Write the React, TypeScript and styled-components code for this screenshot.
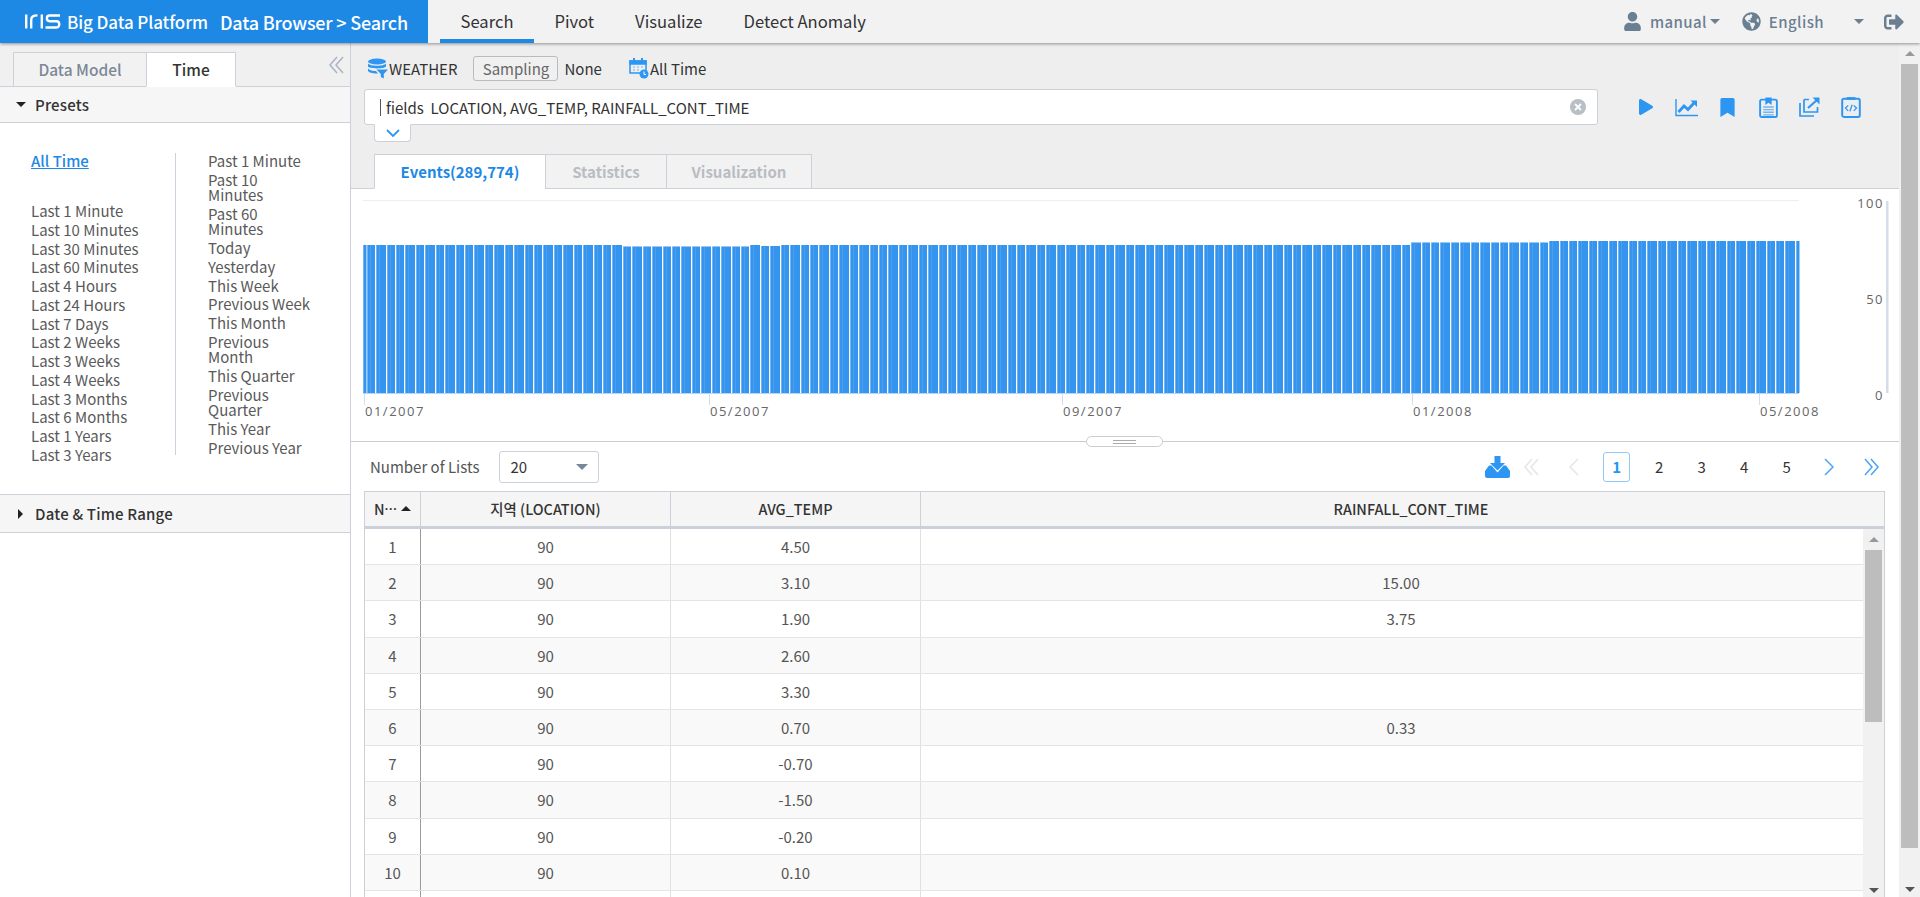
import React from 'react'
import styled, { createGlobalStyle } from 'styled-components'
import { FaUser, FaGlobeAmericas, FaSignOutAlt, FaBookmark, FaPlay } from 'react-icons/fa'

const GlobalStyle = createGlobalStyle`
  html, body {
    margin: 0;
    height: 100%;
    overflow: hidden;
    background: #fff;
  }
  body, button {
    font-family: 'Noto Sans CJK KR', 'Noto Sans', sans-serif;
    font-size: 15px;
    color: #333;
  }
  * {
    box-sizing: border-box;
  }
`

const Page = styled.div`
  display: flex;
  flex-direction: column;
  width: 1920px;
  height: 897px;
  overflow: hidden;
`

/* top bar */
const TopBar = styled.header`
  position: relative;
  z-index: 2;
  display: flex;
  flex: none;
  height: 43px;
  background: #f2f2f2;
  box-shadow: 0 1px 3px rgba(0, 0, 0, 0.4);
`

const Brand = styled.div`
  display: flex;
  align-items: center;
  width: 428px;
  padding-left: 25px;
  background: #1e88e5;
  color: #fff;
`

const BrandName = styled.span`
  margin-left: 6px;
  font-size: 17px;
  font-weight: 500;
  letter-spacing: -0.1px;
`

const BrandPage = styled.span`
  margin-left: 12px;
  font-size: 18px;
  font-weight: 500;
  letter-spacing: -0.2px;
`

const Nav = styled.nav`
  display: flex;
  margin-left: 12px;
`

const NavItem = styled.a<{ $active?: boolean }>`
  display: flex;
  align-items: center;
  height: 43px;
  padding: 3px 20.5px 0;
  border-bottom: 4px solid ${p => (p.$active ? '#1e88e5' : 'transparent')};
  font-size: 16.6px;
  color: #333;
`

const UserMenu = styled.div`
  display: flex;
  align-items: center;
  margin-left: auto;
  padding-right: 16px;
  color: #6b7f92;
  font-weight: 500;
  font-size: 15px;
`

const MenuText = styled.span<{ $gap: number }>`
  margin-left: 8px;
  margin-right: ${p => p.$gap}px;
  letter-spacing: 0.4px;
`

const Caret = styled.i<{ $dir?: 'down' | 'right' | 'up'; $size?: number; $color?: string }>`
  display: inline-block;
  flex: none;
  width: 0;
  height: 0;
  border-style: solid;
  border-color: transparent;
  ${p => {
    const s = p.$size ?? 5
    const c = p.$color ?? 'currentColor'
    if (p.$dir === 'right') return `border-width: ${s}px 0 ${s}px ${s}px; border-left-color: ${c};`
    if (p.$dir === 'up') return `border-width: 0 ${s}px ${s}px; border-bottom-color: ${c};`
    return `border-width: ${s}px ${s}px 0; border-top-color: ${c};`
  }}
`

const CaretSlot = styled.span<{ $gap: number }>`
  display: flex;
  margin-right: ${p => p.$gap}px;
`

/* body */
const Body = styled.div`
  display: flex;
  flex: 1;
  min-height: 0;
`

const Sidebar = styled.aside`
  flex: none;
  width: 351px;
  border-right: 1px solid #ccd1d9;
  background: #fff;
`

const SideTabs = styled.div`
  position: relative;
  display: flex;
  align-items: flex-end;
  height: 44px;
  padding-left: 13px;
  border-bottom: 1px solid #ccd1d9;
  background: #f0f0f0;
`

const SideTab = styled.div<{ $active?: boolean }>`
  display: flex;
  align-items: center;
  justify-content: center;
  width: ${p => (p.$active ? 90 : 134)}px;
  height: 35px;
  padding-bottom: 2px;
  margin-bottom: -1px;
  border: 1px solid #ccd1d9;
  border-bottom-color: ${p => (p.$active ? '#fff' : '#ccd1d9')};
  margin-left: ${p => (p.$active ? -1 : 0)}px;
  background: ${p => (p.$active ? '#fff' : '#f2f2f2')};
  color: ${p => (p.$active ? '#333' : '#7b8896')};
  font-size: 15.5px;
  font-weight: 500;
`

const CollapseIcon = styled.span`
  position: absolute;
  top: 13px;
  right: 6px;
  display: flex;
  color: #a9b4c2;
`

const SectionHead = styled.div<{ $top?: boolean }>`
  display: flex;
  align-items: center;
  height: ${p => (p.$top ? 36 : 39)}px;
  padding-left: ${p => (p.$top ? 16 : 18)}px;
  border-bottom: 1px solid #ccd1d9;
  border-top: ${p => (p.$top ? 'none' : '1px solid #ccd1d9')};
  background: #f6f6f6;
  color: #333;
  font-weight: 500;
`

const SectionTitle = styled.span<{ $gap: number }>`
  margin-left: ${p => p.$gap}px;
  letter-spacing: 0.2px;
`

const Presets = styled.div`
  display: flex;
  align-items: flex-start;
  height: 371px;
  padding: 30px 0 0 31px;
`

const PresetList = styled.ul<{ $second?: boolean }>`
  margin: 0;
  padding: 0 0 0 ${p => (p.$second ? 32 : 0)}px;
  list-style: none;
  width: ${p => (p.$second ? 138 : 144)}px;
  border-left: ${p => (p.$second ? '1px solid #ccd1d9' : 'none')};
`

const PresetItem = styled.li<{ $active?: boolean }>`
  margin-bottom: ${p => (p.$active ? 34.6 : 3.37)}px;
  line-height: 15.4px;
  color: ${p => (p.$active ? '#1e88e5' : '#5a5a5a')};
  font-weight: ${p => (p.$active ? 500 : 400)};
  text-decoration: ${p => (p.$active ? 'underline' : 'none')};
  &:last-child {
    margin-bottom: 0;
  }
`

const Main = styled.main`
  display: flex;
  flex: 1;
  flex-direction: column;
  min-width: 0;
  background: #eee;
`

const SourceRow = styled.div`
  display: flex;
  align-items: center;
  height: 46px;
  padding: 4px 0 0 16px;
`

const SourceName = styled.span`
  margin-left: 1px;
`

const SamplingButton = styled.button`
  width: 85px;
  height: 25px;
  margin: 0 6px 0 16px;
  padding: 0;
  border: 1px solid #bbb;
  border-radius: 3px;
  background: #f0f0f0;
  color: #666;
  font-size: 15px;
  line-height: 21px;
`

const NoneLabel = styled.span`
  margin-right: 27px;
`

const QueryRow = styled.div`
  display: flex;
  align-items: center;
  padding-left: 13px;
`

const QueryBox = styled.div`
  display: flex;
  align-items: center;
  justify-content: space-between;
  width: 1234px;
  height: 36px;
  padding: 0 11px 0 15px;
  border: 1px solid #ccd1d9;
  border-radius: 3px;
  background: #fff;
  color: #333;
`

const QueryText = styled.span`
  white-space: pre;
  border-left: 1px solid #555;
  padding-left: 5px;
  line-height: 17px;
`

const ActionIcons = styled.div`
  display: flex;
  margin-left: 27px;
  color: #2d96f3;
`

const ActionIcon = styled.span`
  display: flex;
  align-items: center;
  justify-content: center;
  width: 41px;
  height: 24px;
`

const ExpandTab = styled.div`
  display: flex;
  align-items: center;
  justify-content: center;
  width: 37px;
  height: 18px;
  margin: -1px 0 0 23px;
  position: relative;
  border: 1px solid #ccd1d9;
  border-top-color: #fff;
  border-radius: 0 0 4px 4px;
  background: #fff;
  color: #2d96f3;
`

const ResultTabs = styled.div`
  display: flex;
  margin: 12px 0 0 23px;
`

const ResultTab = styled.div<{ $active?: boolean; $w: number }>`
  position: relative;
  z-index: 1;
  display: flex;
  align-items: center;
  justify-content: center;
  width: ${p => p.$w}px;
  height: 35px;
  margin-right: -1px;
  border: 1px solid #ccd1d9;
  border-bottom-color: ${p => (p.$active ? '#fff' : '#ccd1d9')};
  background: ${p => (p.$active ? '#fff' : '#f2f2f2')};
  color: ${p => (p.$active ? '#1e88e5' : '#b9bdc2')};
  font-weight: 700;
`

const ResultPanel = styled.section`
  display: flex;
  flex: 1;
  flex-direction: column;
  min-height: 0;
  margin-top: -1px;
  border-top: 1px solid #ccd1d9;
  background: #fff;
`

const ChartArea = styled.div`
  position: relative;
  flex: none;
  height: 253px;
  border-bottom: 1px solid #ccc;
`

const ChartSvg = styled.svg`
  display: block;
`

const ChartLabel = styled.text`
  font-family: 'Open Sans', sans-serif;
  font-size: 13px;
  letter-spacing: 1.5px;
  fill: #666;
`

const SplitHandle = styled.div`
  position: absolute;
  left: 735px;
  bottom: -6px;
  display: flex;
  align-items: center;
  justify-content: center;
  width: 77px;
  height: 11px;
  border: 1px solid #ccc;
  border-radius: 6px;
  background: #fff;
`

const HandleGrip = styled.span`
  width: 23px;
  height: 4px;
  border-top: 1px solid #aaa;
  border-bottom: 1px solid #aaa;
`

const ListToolbar = styled.div`
  display: flex;
  flex: none;
  align-items: center;
  height: 49px;
  padding: 0 6px 0 19px;
`

const ListLabel = styled.span`
  color: #555;
`

const PageSizeSelect = styled.div`
  display: flex;
  align-items: center;
  justify-content: space-between;
  width: 100px;
  height: 32px;
  margin-left: 20px;
  padding: 0 10px;
  border: 1px solid #ccd1d9;
  border-radius: 3px;
  color: #333;
`

const Pager = styled.div`
  display: flex;
  align-items: center;
  margin-left: auto;
`

const DownloadIcon = styled.span`
  display: flex;
  margin-right: 1px;
  color: #2d96f3;
`

const PagerCell = styled.span<{ $tone?: 'off' | 'on' }>`
  display: flex;
  align-items: center;
  justify-content: center;
  width: 42.5px;
  height: 30px;
  color: ${p => (p.$tone === 'off' ? '#e3e5e8' : p.$tone === 'on' ? '#4aa3f5' : '#333')};
`

const CurrentPage = styled.span`
  display: flex;
  align-items: center;
  justify-content: center;
  width: 27px;
  height: 30px;
  border: 1px solid #90c8f8;
  border-radius: 3px;
  color: #2196f3;
  font-weight: 700;
`

const Table = styled.div`
  display: flex;
  flex: 1;
  flex-direction: column;
  min-height: 0;
  width: 1521px;
  margin-left: 13px;
  border: 1px solid #ccd1d9;
  border-bottom: none;
`

const HeadRow = styled.div`
  display: grid;
  flex: none;
  grid-template-columns: 56px 250px 250px 1fr;
  height: 37px;
  border-bottom: 3px solid #ccd1d9;
  background: #f5f5f5;
  color: #333;
  font-size: 14.4px;
  font-weight: 500;
`

const HeadCell = styled.div`
  display: flex;
  align-items: center;
  justify-content: center;
  gap: 4px;
  padding-bottom: 2px;
  border-right: 1px solid #ccd1d9;
  &:last-child {
    padding-left: 17px;
    border-right: none;
  }
`

const HeadDots = styled.span`
  margin-left: -4px;
  font-family: 'Noto Sans', sans-serif;
  letter-spacing: 0.3px;
`

const TableBody = styled.div`
  display: flex;
  flex: 1;
  min-height: 0;
`

const Rows = styled.div`
  flex: 1;
  min-width: 0;
`

const Row = styled.div<{ $even: boolean }>`
  display: grid;
  grid-template-columns: 56px 250px 250px 1fr;
  height: 36.2px;
  border-bottom: 1px solid #e4e4e4;
  background: ${p => (p.$even ? '#f9f9f9' : '#fff')};
  color: #555;
`

const Cell = styled.div`
  display: flex;
  align-items: center;
  justify-content: center;
  border-right: 1px solid #e0e0e0;
  &:first-child {
    border-right-color: #9a9a9a;
  }
  &:last-child {
    padding-left: 18px;
    border-right: none;
  }
`

const ScrollTrack = styled.div<{ $w: number }>`
  display: flex;
  flex: none;
  flex-direction: column;
  align-items: center;
  width: ${p => p.$w}px;
  padding-bottom: 2px;
  background: #f1f1f1;
`

const ScrollArrow = styled.div<{ $h: number }>`
  display: flex;
  align-items: center;
  justify-content: center;
  height: ${p => p.$h}px;
`

const ScrollThumb = styled.div<{ $h: number }>`
  flex: none;
  width: 17px;
  height: ${p => p.$h}px;
  margin-bottom: auto;
  background: #bdbdbd;
`

/* icons */
const LogoMark = () => (
  <svg width="36" height="15" viewBox="0 0 36 15" fill="none" stroke="#fff" strokeWidth="2.4">
    <path d="M1.2 0.5V14.5" />
    <path d="M6.2 14.5V6C6.2 3 8 1.4 12.5 1.4" />
    <path d="M16.8 0.5V14.5" />
    <path d="M35 1.5H24.5C21 1.5 21 7.2 24.5 7.2H31.5C35.2 7.2 35.2 13.5 31.5 13.5H20.5" />
  </svg>
)

const DatabaseIcon = () => (
  <svg width="21" height="21" viewBox="0 0 21 21" fill="#2d96f3">
    <ellipse cx="10" cy="3.5" rx="9" ry="3" />
    <path d="M1 5.5C3 8.5 17 8.5 19 5.5V8.5C17 11 3 11 1 8.5Z" />
    <path d="M1 10.5C2.5 12.5 6 13 9 13L11 15.5C6 15.8 2 14.5 1 13Z" />
    <path d="M9.5 11.5H21L16.8 16V20.5L13.8 19V16Z" />
  </svg>
)

const CalendarIcon = () => (
  <svg width="20" height="24" viewBox="0 0 20 24" fill="none" stroke="#2d96f3" strokeWidth="1.5">
    <path d="M1 5H17V17H1Z" />
    <path d="M1 5H17V8H1Z" fill="#2d96f3" />
    <path d="M5 2V6M13 2V6" strokeWidth="2" />
    <path d="M4 11H6M8 11H10M12 11H14M4 14H6M8 14H10" stroke="#9cc9f5" />
    <circle cx="15" cy="18" r="4.5" fill="#2d96f3" stroke="none" />
    <path d="M15 15.5V18.5H17" stroke="#fff" strokeWidth="1" />
  </svg>
)

const ChevronDouble = ({ dir, size = 15, sw = 1.5 }: { dir: 'left' | 'right'; size?: number; sw?: number }) => (
  <svg width={size} height={size + 3} viewBox="0 0 15 18" fill="none" stroke="currentColor" strokeWidth={sw}>
    <path d={dir === 'left' ? 'M8 1L1 9L8 17M14 1L7 9L14 17' : 'M1 1L8 9L1 17M7 1L14 9L7 17'} />
  </svg>
)

const ChevronSingle = ({ dir }: { dir: 'left' | 'right' }) => (
  <svg width="10" height="18" viewBox="0 0 10 18" fill="none" stroke="currentColor" strokeWidth="1.5">
    <path d={dir === 'left' ? 'M9 1L1 9L9 17' : 'M1 1L9 9L1 17'} />
  </svg>
)

const ClearIcon = () => (
  <svg width="16" height="16" viewBox="0 0 16 16">
    <circle cx="8" cy="8" r="8" fill="#b8bfc7" />
    <path d="M5 5L11 11M11 5L5 11" stroke="#fff" strokeWidth="1.8" />
  </svg>
)

const TrendIcon = () => (
  <svg width="23" height="19" viewBox="0 0 23 19" fill="none" stroke="currentColor">
    <path d="M1 1V17.5H23" strokeWidth="1.4" />
    <path d="M3.5 14L9 8L13 11.5L19 5" strokeWidth="2.8" />
    <path d="M15.5 2.5H22V9Z" fill="currentColor" stroke="none" />
  </svg>
)

const ClipboardIcon = () => (
  <svg width="19" height="21" viewBox="0 0 18 20" fill="none" stroke="currentColor">
    <rect x="1" y="2.5" width="16" height="16.5" rx="1.5" strokeWidth="1.8" />
    <path d="M6 0.5H12V7.5L9 5.5L6 7.5Z" fill="currentColor" stroke="none" />
    <path d="M4 9.5H14M4 12H14M4 14.5H14M4 17H14" strokeWidth="1.3" opacity="0.65" />
  </svg>
)

const ShareIcon = () => (
  <svg width="21" height="20" viewBox="0 0 21 20" fill="none" stroke="currentColor" strokeWidth="1.7">
    <path d="M1 6V19H15" />
    <path d="M5 2.5H10M5 2.5V15H18.5V10" />
    <path d="M9 11L18 3" strokeWidth="2.2" />
    <path d="M13.5 0.5H20.5V7.5Z" fill="currentColor" stroke="none" />
  </svg>
)

const CodeFileIcon = () => (
  <svg width="20" height="22" viewBox="0 0 18 20" fill="none" stroke="currentColor">
    <rect x="1" y="2.5" width="16" height="16.5" rx="1.5" strokeWidth="1.8" />
    <path d="M5 1H13V3.5H5Z" fill="currentColor" stroke="none" />
    <path d="M6.5 8.5L4 11L6.5 13.5M11.5 8.5L14 11L11.5 13.5M10 8L8 14" strokeWidth="1.2" />
  </svg>
)

const DownloadTray = () => (
  <svg width="25" height="22" viewBox="0 0 25 22" fill="currentColor">
    <path d="M9.5 0H15.5V7H20L12.5 14.5L5 7H9.5Z" />
    <path d="M0 15L4 9.5H6.5L12.5 16.5L18.5 9.5H21L25 15V20C25 21 24 22 23 22H2C1 22 0 21 0 20Z" />
  </svg>
)

/* data */
const LEFT_PRESETS = [
  'Last 1 Minute', 'Last 10 Minutes', 'Last 30 Minutes', 'Last 60 Minutes', 'Last 4 Hours', 'Last 24 Hours',
  'Last 7 Days', 'Last 2 Weeks', 'Last 3 Weeks', 'Last 4 Weeks', 'Last 3 Months', 'Last 6 Months', 'Last 1 Years',
  'Last 3 Years',
]

const RIGHT_PRESETS = [
  'Past 1 Minute', 'Past 10 Minutes', 'Past 60 Minutes', 'Today', 'Yesterday', 'This Week', 'Previous Week',
  'This Month', 'Previous Month', 'This Quarter', 'Previous Quarter', 'This Year', 'Previous Year',
]

const ROWS = [
  ['1', '90', '4.50', ''],
  ['2', '90', '3.10', '15.00'],
  ['3', '90', '1.90', '3.75'],
  ['4', '90', '2.60', ''],
  ['5', '90', '3.30', ''],
  ['6', '90', '0.70', '0.33'],
  ['7', '90', '-0.70', ''],
  ['8', '90', '-1.50', ''],
  ['9', '90', '-0.20', ''],
  ['10', '90', '0.10', ''],
  ['', '', '', ''],
]

const X_TICKS = [
  { x: 13, label: '01/2007' },
  { x: 358, label: '05/2007' },
  { x: 711, label: '09/2007' },
  { x: 1061, label: '01/2008' },
  { x: 1408, label: '05/2008' },
]

const PITCHES = [9, 11, 9, 9, 11, 9, 11]
const BAR_BOTTOM = 204

function barTop(x: number) {
  // x in chart coordinates, tops read off the reference
  if (x > 1190) return 52
  if (x > 1054) return 53.5
  if (x > 396 && x < 464) return x % 3 < 1.5 ? 56 : 57
  if (x > 270 && x <= 396) return 57.5
  return 56
}

function buildBars() {
  const bars: { x: number; w: number; top: number }[] = [{ x: 12, w: 3, top: 56 }]
  let x = 16
  let i = 0
  while (x < 1448) {
    const pitch = PITCHES[i % PITCHES.length]
    const w = Math.min(pitch - 1, 1448 - x)
    bars.push({ x, w, top: barTop(x) })
    x += pitch
    i += 1
  }
  return bars
}

const BARS = buildBars()

const ActivityChart = () => (
  <ChartSvg width="1548" height="252" viewBox="0 0 1548 252">
    <line x1="12" y1="11.5" x2="1448" y2="11.5" stroke="#eee" />
    {BARS.map(b => (
      <g key={b.x}>
        <rect x={b.x} y={b.top} width={b.w} height={BAR_BOTTOM - b.top} fill="#3494ee" />
        <rect x={b.x} y={b.top} width="0.6" height={BAR_BOTTOM - b.top} fill="#9ccbf6" />
        <rect x={b.x + 3} y={b.top} width="0.6" height={BAR_BOTTOM - b.top} fill="#5aa9f1" />
      </g>
    ))}
    <line x1="12" y1="204.5" x2="1448" y2="204.5" stroke="#b4d6f7" />
    {X_TICKS.map(t => (
      <g key={t.label}>
        <line x1={t.x + 0.5} y1="205" x2={t.x + 0.5} y2="216" stroke="#d5dcea" />
        <ChartLabel x={t.x + 1} y="227">{t.label}</ChartLabel>
      </g>
    ))}
    <rect x="1535" y="12" width="2.5" height="192" fill="#d5dcea" />
    <ChartLabel x="1533" y="19" textAnchor="end">100</ChartLabel>
    <ChartLabel x="1533" y="115" textAnchor="end">50</ChartLabel>
    <ChartLabel x="1533" y="211" textAnchor="end">0</ChartLabel>
  </ChartSvg>
)

export default function App() {
  return (
    <Page>
      <GlobalStyle />
      <TopBar>
        <Brand>
          <LogoMark />
          <BrandName>Big Data Platform</BrandName>
          <BrandPage>Data Browser &gt; Search</BrandPage>
        </Brand>
        <Nav>
          <NavItem $active>Search</NavItem>
          <NavItem>Pivot</NavItem>
          <NavItem>Visualize</NavItem>
          <NavItem>Detect Anomaly</NavItem>
        </Nav>
        <UserMenu>
          <FaUser size={19} />
          <MenuText $gap={3}>manual</MenuText>
          <CaretSlot $gap={22}><Caret /></CaretSlot>
          <FaGlobeAmericas size={19} />
          <MenuText $gap={30}>English</MenuText>
          <CaretSlot $gap={20}><Caret /></CaretSlot>
          <FaSignOutAlt size={20} />
        </UserMenu>
      </TopBar>
      <Body>
        <Sidebar>
          <SideTabs>
            <SideTab>Data Model</SideTab>
            <SideTab $active>Time</SideTab>
            <CollapseIcon><ChevronDouble dir="left" size={15} /></CollapseIcon>
          </SideTabs>
          <SectionHead $top>
            <Caret $color="#222" />
            <SectionTitle $gap={9}>Presets</SectionTitle>
          </SectionHead>
          <Presets>
            <PresetList>
              <PresetItem $active>All Time</PresetItem>
              {LEFT_PRESETS.map(name => (
                <PresetItem key={name}>{name}</PresetItem>
              ))}
            </PresetList>
            <PresetList $second>
              {RIGHT_PRESETS.map(name => (
                <PresetItem key={name}>{name}</PresetItem>
              ))}
            </PresetList>
          </Presets>
          <SectionHead>
            <Caret $dir="right" $color="#222" />
            <SectionTitle $gap={12}>Date &amp; Time Range</SectionTitle>
          </SectionHead>
        </Sidebar>
        <Main>
          <SourceRow>
            <DatabaseIcon />
            <SourceName>WEATHER</SourceName>
            <SamplingButton>Sampling</SamplingButton>
            <NoneLabel>None</NoneLabel>
            <CalendarIcon />
            <SourceName>All Time</SourceName>
          </SourceRow>
          <QueryRow>
            <QueryBox>
              <QueryText>fields  LOCATION, AVG_TEMP, RAINFALL_CONT_TIME</QueryText>
              <ClearIcon />
            </QueryBox>
            <ActionIcons>
              <ActionIcon><FaPlay size={16} /></ActionIcon>
              <ActionIcon><TrendIcon /></ActionIcon>
              <ActionIcon><FaBookmark size={19} /></ActionIcon>
              <ActionIcon><ClipboardIcon /></ActionIcon>
              <ActionIcon><ShareIcon /></ActionIcon>
              <ActionIcon><CodeFileIcon /></ActionIcon>
            </ActionIcons>
          </QueryRow>
          <ExpandTab>
            <svg width="14" height="9" viewBox="0 0 14 9" fill="none" stroke="currentColor" strokeWidth="1.8">
              <path d="M1 1L7 7L13 1" />
            </svg>
          </ExpandTab>
          <ResultTabs>
            <ResultTab $active $w={172}>Events(289,774)</ResultTab>
            <ResultTab $w={122}>Statistics</ResultTab>
            <ResultTab $w={146}>Visualization</ResultTab>
          </ResultTabs>
          <ResultPanel>
            <ChartArea>
              <ActivityChart />
              <SplitHandle><HandleGrip /></SplitHandle>
            </ChartArea>
            <ListToolbar>
              <ListLabel>Number of Lists</ListLabel>
              <PageSizeSelect>
                20
                <Caret $size={6} $color="#78879b" />
              </PageSizeSelect>
              <Pager>
                <DownloadIcon><DownloadTray /></DownloadIcon>
                <PagerCell $tone="off"><ChevronDouble dir="left" /></PagerCell>
                <PagerCell $tone="off"><ChevronSingle dir="left" /></PagerCell>
                <PagerCell><CurrentPage>1</CurrentPage></PagerCell>
                <PagerCell>2</PagerCell>
                <PagerCell>3</PagerCell>
                <PagerCell>4</PagerCell>
                <PagerCell>5</PagerCell>
                <PagerCell $tone="on"><ChevronSingle dir="right" /></PagerCell>
                <PagerCell $tone="on"><ChevronDouble dir="right" /></PagerCell>
              </Pager>
            </ListToolbar>
            <Table>
              <HeadRow>
                <HeadCell>N<HeadDots>···</HeadDots><Caret $dir="up" $color="#222" /></HeadCell>
                <HeadCell>지역 (LOCATION)</HeadCell>
                <HeadCell>AVG_TEMP</HeadCell>
                <HeadCell>RAINFALL_CONT_TIME</HeadCell>
              </HeadRow>
              <TableBody>
                <Rows>
                  {ROWS.map((row, i) => (
                    <Row key={i} $even={i % 2 === 1}>
                      {row.map((value, c) => (
                        <Cell key={c}>{value}</Cell>
                      ))}
                    </Row>
                  ))}
                </Rows>
                <ScrollTrack $w={21}>
                  <ScrollArrow $h={21}><Caret $dir="up" $color="#999" /></ScrollArrow>
                  <ScrollThumb $h={172} />
                  <ScrollArrow $h={10}><Caret $color="#555" /></ScrollArrow>
                </ScrollTrack>
              </TableBody>
            </Table>
          </ResultPanel>
        </Main>
        <ScrollTrack $w={21}>
          <ScrollArrow $h={21}><Caret $dir="up" $color="#999" /></ScrollArrow>
          <ScrollThumb $h={784} />
          <ScrollArrow $h={12}><Caret $color="#555" /></ScrollArrow>
        </ScrollTrack>
      </Body>
    </Page>
  )
}
